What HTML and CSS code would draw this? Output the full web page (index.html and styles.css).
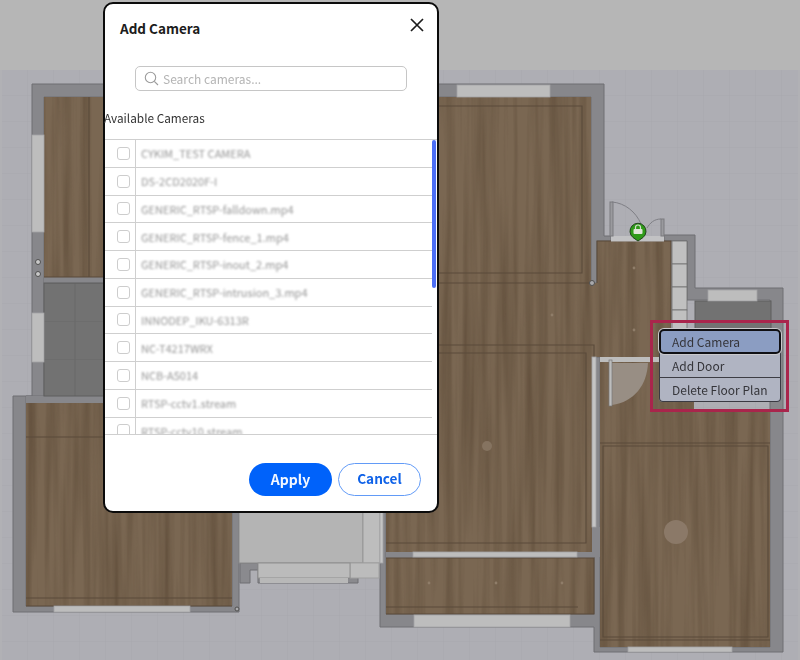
FILE: index.html
```html
<!DOCTYPE html>
<html lang="en">
<head>
<meta charset="utf-8">
<title>Add Camera</title>
<link rel="stylesheet" href="styles.css">
</head>
<body>
<div class="stage">
  <svg class="plan" width="800" height="660" viewBox="0 0 800 660" aria-hidden="true">
    <defs>
      <pattern id="grid" width="26" height="26" patternUnits="userSpaceOnUse" x="2" y="70">
        <rect width="26" height="26" fill="#aeaeb4"/>
        <path d="M26 0V26M0 26H26" stroke="#a8a8ae" stroke-width="1" fill="none"/>
      </pattern>
      <pattern id="tile" width="36" height="38" patternUnits="userSpaceOnUse" x="44" y="283">
        <rect width="36" height="38" fill="#727272"/>
        <path d="M0 0H36M31 0V38" stroke="#686868" stroke-width="1" fill="none"/>
      </pattern>
      <filter id="grain" x="0" y="0" width="100%" height="100%" color-interpolation-filters="sRGB">
        <feTurbulence type="fractalNoise" baseFrequency="0.11 0.004" numOctaves="3" seed="4" result="n"/>
        <feColorMatrix in="n" type="matrix" values="0 0 0 0 0.3  0 0 0 0 0.23  0 0 0 0 0.16  0.9 0 0 0 -0.33" result="d"/>
        <feComposite in="d" in2="SourceAlpha" operator="in" result="c"/>
        <feMerge><feMergeNode in="SourceGraphic"/><feMergeNode in="c"/></feMerge>
      </filter>
    </defs>

    <rect width="800" height="70" fill="#b6b6b6"/>
    <rect y="70" width="800" height="590" fill="#b1b1b5"/>
    <rect x="2" y="70" width="796" height="590" fill="url(#grid)"/>

    <!-- wall masses -->
    <g fill="#87878b" stroke="#6f6f73" stroke-width="1">
      <path d="M32 84H604V236H611V241H597V283H591V97H44V396H26V606H232V511H239V612H13V396H32Z"/>
      <path d="M664 241V235H695V288H783V652H594V627H380V505H386V614H594V357H600V647H770V300H687V241Z"/>
      <path d="M240 563H258V583H358V563H350V578H266V570H250V583H240Z" fill="#8a8a8e"/>
    </g>
    <g fill="#87878b">
      <rect x="44" y="277" width="62" height="6"/>
      <rect x="26" y="396" width="80" height="7"/>
      <rect x="386" y="552" width="208" height="6"/>
      <rect x="592" y="527" width="8" height="30"/>
    </g>

    <!-- terrace -->
    <rect x="239" y="511" width="124" height="52" fill="#b4b4b4" stroke="#8b8b8b"/>
    <rect x="363" y="511" width="17" height="52" fill="#bdbdbd" stroke="#999"/>
    <rect x="350" y="563" width="29" height="15" fill="#bcbcbc" stroke="#a0a0a0"/>
    <rect x="258" y="563" width="92" height="15" fill="#bbb" stroke="#8f8f8f"/>
    <rect x="260" y="578" width="88" height="5" fill="#b8b8b8"/>

    <!-- dark tile -->
    <rect x="44" y="283" width="62" height="113" fill="url(#tile)" stroke="#5e5e5e"/>
    <rect x="695" y="301" width="76" height="40" fill="#727272" stroke="#5e5e5e"/>

    <!-- wood floors -->
    <g fill="#7a6752" filter="url(#grain)">
      <rect x="44" y="97" width="62" height="180"/>
      <rect x="26" y="403" width="206" height="203"/>
      <path d="M438 97H591V283H597V241H671V357H593V405H592V552H438Z"/>
      <rect x="386" y="495" width="206" height="57"/>
      <rect x="386" y="558" width="208" height="56"/>
      <rect x="600" y="410" width="170" height="237"/>
      <rect x="600" y="357" width="94" height="55"/>
    </g>

    <!-- floor outlines -->
    <g fill="none" stroke="#5a4a3a" stroke-width="1.1">
      <path d="M89 97V277M44 277H106"/>
      <path d="M26 437H232M26 598H232M26 606H232"/>
      <path d="M438 106H582V273H438M438 283H591"/>
      <path d="M438 353H586V543H386M438 345H594V405"/>
      <path d="M386 558H594V614H386M386 607H578"/>
      <path d="M600 443H770M603 446H768V637H603ZM600 640H770"/>
      <path d="M597 283V241H671V320"/>
    </g>

    <!-- windows -->
    <g fill="#bdbdbd" stroke="#a3a3a5" stroke-width=".8">
      <rect x="457" y="85" width="93" height="12"/>
      <rect x="32" y="135" width="12" height="97"/>
      <rect x="32" y="313" width="12" height="49"/>
      <rect x="54" y="606" width="136" height="6"/>
      <rect x="413" y="552" width="164" height="5"/>
      <rect x="414" y="615" width="156" height="12"/>
      <rect x="628" y="647" width="104" height="5"/>
      <rect x="708" y="290" width="49" height="11"/>
      <rect x="592" y="357" width="4" height="170" fill="#c4c4c4"/>
      <rect x="380" y="505" width="3" height="58" fill="#c4c4c4"/>
    </g>

    <!-- stairs -->
    <g fill="#c0c0c0" stroke="#6e6e6e" stroke-width=".8">
      <rect x="672" y="241" width="15" height="23"/>
      <rect x="672" y="264" width="15" height="23"/>
      <rect x="672" y="287" width="15" height="23"/>
      <rect x="672" y="310" width="15" height="23"/>
    </g>

    <!-- entry gap and doors -->
    <rect x="611" y="236" width="53" height="5.5" fill="#c2c2c4"/>
    <g fill="#9a9a9e" stroke="#7a7a7e" stroke-width="1">
      <rect x="610" y="202" width="3" height="34"/>
      <rect x="661" y="219" width="3" height="17"/>
    </g>
    <path d="M612 202C625 203 636 212 641 224M661 219C654 219 650 223 647 228" fill="none" stroke="#7f7f85" stroke-width="1"/>

    <!-- inner door -->
    <rect x="600" y="357" width="60" height="5" fill="#bdbdbd"/>
    <path d="M612 363H648C647 385 634 402 612 405Z" fill="#988e84"/>
    <rect x="609" y="360" width="3" height="46" fill="#bdbdbd" stroke="#777" stroke-width=".7"/>

    <!-- floor dots -->
    <circle cx="676" cy="532" r="12" fill="#8b7968"/>
    <g fill="#8f7d69">
      <circle cx="487" cy="446" r="5" fill="#857360"/>
      <circle cx="429" cy="583" r="1.4"/>
      <circle cx="496" cy="583" r="1.4"/>
      <circle cx="562" cy="583" r="1.4"/>
      <circle cx="634" cy="268" r="1.4"/>
      <circle cx="634" cy="330" r="1.4"/>
      <circle cx="552" cy="315" r="1.4"/>
    </g>

    <!-- wall fixtures -->
    <g fill="#a9a9ac" stroke="#4f4f4f" stroke-width="1">
      <circle cx="38" cy="262" r="2.5" fill="#c8c8c8"/>
      <circle cx="38" cy="274" r="2.5" fill="#c8c8c8"/>
      <circle cx="237" cy="609" r="2"/>
      <circle cx="592" cy="283" r="2.5"/>
    </g>

    <!-- door pin -->
    <path d="M638 241L633 237.5A8 8 0 1 1 643 237.5Z" fill="#2f9a19" stroke="#20451a" stroke-width="1"/>
    <path d="M635.5 229V227.5A2.5 2.5 0 0 1 640.5 227.5V229" fill="none" stroke="#d5ddcc" stroke-width="1.2"/>
    <rect x="633.5" y="229" width="9" height="5" rx="1" fill="#e1e6da"/>
  </svg>

  <section class="modal">
    <header class="modal-head">
      <h2 class="modal-title">Add Camera</h2>
      <svg class="close" width="14" height="14" viewBox="0 0 14 14" aria-hidden="true"><path d="M1 1L13 13M13 1L1 13"/></svg>
    </header>
    <div class="search">
      <svg class="search-icon" width="15" height="15" viewBox="0 0 15 15" aria-hidden="true"><circle cx="6.5" cy="6.5" r="5.2"/><path d="M10.3 10.3L14 14"/></svg>
      <span class="search-text">Search cameras...</span>
    </div>
    <div class="list-label">Available Cameras</div>
    <div class="list">
      <div class="row"><span class="cell-check"><span class="check"></span></span><span class="name">CYKIM_TEST CAMERA</span></div>
      <div class="row"><span class="cell-check"><span class="check"></span></span><span class="name">DS-2CD2020F-I</span></div>
      <div class="row"><span class="cell-check"><span class="check"></span></span><span class="name">GENERIC_RTSP-falldown.mp4</span></div>
      <div class="row"><span class="cell-check"><span class="check"></span></span><span class="name">GENERIC_RTSP-fence_1.mp4</span></div>
      <div class="row"><span class="cell-check"><span class="check"></span></span><span class="name">GENERIC_RTSP-inout_2.mp4</span></div>
      <div class="row"><span class="cell-check"><span class="check"></span></span><span class="name">GENERIC_RTSP-intrusion_3.mp4</span></div>
      <div class="row"><span class="cell-check"><span class="check"></span></span><span class="name">INNODEP_IKU-6313R</span></div>
      <div class="row"><span class="cell-check"><span class="check"></span></span><span class="name">NC-T4217WRX</span></div>
      <div class="row"><span class="cell-check"><span class="check"></span></span><span class="name">NCB-A5014</span></div>
      <div class="row"><span class="cell-check"><span class="check"></span></span><span class="name">RTSP-cctv1.stream</span></div>
      <div class="row"><span class="cell-check"><span class="check"></span></span><span class="name">RTSP-cctv10.stream</span></div>
      <div class="scrollbar"></div>
    </div>
    <footer class="modal-foot">
      <button class="btn btn-primary" type="button">Apply</button>
      <button class="btn btn-outline" type="button">Cancel</button>
    </footer>
  </section>

  <div class="callout"></div>
  <ul class="menu">
    <li class="menu-item menu-item-active">Add Camera</li>
    <li class="menu-item">Add Door</li>
    <li class="menu-item">Delete Floor Plan</li>
  </ul>
</div>
</body>
</html>
```
FILE: styles.css
```css
* { box-sizing: border-box; }
html, body { margin: 0; padding: 0; }
body {
  width: 800px;
  height: 660px;
  overflow: hidden;
  background: #b1b1b5;
  font-family: "Noto Sans CJK KR", "Noto Sans", sans-serif;
}
.stage {
  position: relative;
  width: 800px;
  height: 660px;
  overflow: hidden;
}
.plan {
  display: block;
  filter: blur(0.6px);
}

/* dialog */
.modal {
  position: absolute;
  left: 103px;
  top: 2px;
  width: 336px;
  height: 511px;
  display: flex;
  flex-direction: column;
  background: #fff;
  border: 2px solid #0b0b0b;
  border-radius: 10px;
  color: #222;
  filter: blur(0.3px);
}
.modal-head {
  display: flex;
  justify-content: space-between;
  align-items: flex-start;
  height: 62px;
  padding: 12px 13px 0 15px;
}
.modal-title {
  margin: 0;
  font-size: 13.5px;
  line-height: 24px;
  font-weight: 700;
  color: #1c1c1c;
}
.close {
  margin-top: 2px;
  fill: none;
  stroke: #1c1c1c;
  stroke-width: 1.7;
}
.search {
  display: flex;
  align-items: center;
  gap: 4px;
  height: 25px;
  margin: 0 30px;
  padding: 0 8px;
  border: 1.5px solid #c6c6c6;
  border-radius: 5px;
}
.search-icon {
  flex: none;
  fill: none;
  stroke: #9c9c9c;
  stroke-width: 1.1;
}
.search-text {
  font-size: 12px;
  color: #b4b4b4;
}
.list-label {
  height: 18px;
  margin-top: 18px;
  margin-left: -1px;
  font-size: 11.8px;
  line-height: 18px;
  color: #333;
}
.list {
  position: relative;
  height: 296px;
  margin-top: 12px;
  overflow: hidden;
  border-top: 1px solid #cfcfcf;
  border-bottom: 1px solid #cfcfcf;
}
.row {
  display: flex;
  align-items: center;
  width: 327px;
  height: 27.75px;
  border-bottom: 1px solid #cfcfcf;
}
.cell-check {
  display: flex;
  align-items: center;
  justify-content: center;
  flex: none;
  width: 31px;
  height: 100%;
  padding-left: 6px;
  border-right: 1px solid #cfcfcf;
}
.check {
  width: 13px;
  height: 13px;
  border: 1.5px solid #cdcdcd;
  border-radius: 3px;
}
.name {
  padding-left: 5px;
  font-size: 11px;
  color: #959595;
  filter: blur(1.2px);
  white-space: nowrap;
}
.scrollbar {
  position: absolute;
  left: 327px;
  top: 0;
  width: 4px;
  height: 148px;
  border-radius: 2px;
  background: #4d6ff5;
}
.modal-foot {
  display: flex;
  justify-content: flex-end;
  gap: 6px;
  padding: 28px 16px 0 0;
}
.btn {
  width: 83px;
  height: 33px;
  padding: 0 0 2px;
  border-radius: 17px;
  font-family: inherit;
  font-size: 14px;
  font-weight: 700;
  line-height: 1;
}
.btn-primary {
  background: #0062fa;
  border: 0;
  color: #f4f8ff;
}
.btn-outline {
  background: #fff;
  border: 1.5px solid #629bf7;
  color: #0f62e8;
  font-size: 13.6px;
}

/* annotation and context menu */
.callout {
  position: absolute;
  left: 650px;
  top: 320px;
  width: 139px;
  height: 92px;
  border: 3px solid #a9254c;
}
.menu {
  position: absolute;
  left: 659px;
  top: 329px;
  width: 122px;
  margin: 0;
  padding: 0;
  list-style: none;
  background: #b0b4c2;
  border-radius: 4px;
  box-shadow: 0 0 0 1px #3a3a42 inset;
  filter: blur(0.3px);
}
.menu-item {
  height: 24px;
  padding-left: 13px;
  font-size: 12px;
  line-height: 23px;
  color: #35353a;
  border-bottom: 1.5px solid #3d3d44;
}
.menu-item:last-child { border-bottom: 0; }
.menu-item-active {
  height: 25px;
  background: #8b9dc2;
  border: 2px solid #101014;
  border-radius: 5px;
  padding-left: 11px;
  line-height: 22px;
  box-shadow: 0 0 0 1px #c9c9cc;
}
```
